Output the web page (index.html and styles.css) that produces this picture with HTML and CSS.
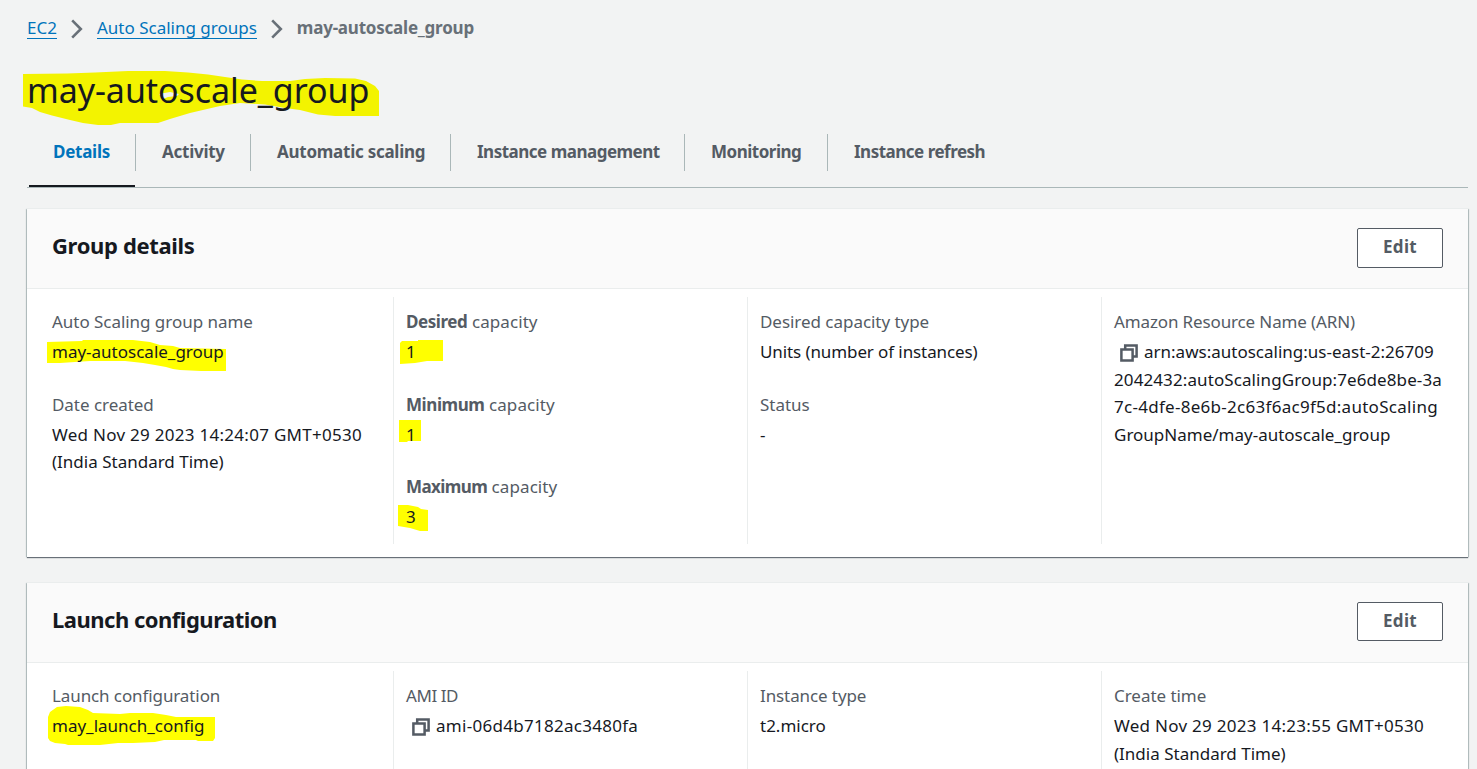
FILE: index.html
```html
<!DOCTYPE html>
<html lang="en">
<head>
<meta charset="utf-8">
<title>may-autoscale_group</title>
<link rel="stylesheet" href="styles.css">
</head>
<body>
<svg width="0" height="0" class="defs">
  <symbol id="copy" viewBox="0 0 18 18"><path d="M5.200 5V1.400h11.400v11.200H13M1.400 5.400h11.200v11.200H1.400z" fill="none" stroke="#545b64" stroke-width="2.500"/></symbol>
  <symbol id="chevron" viewBox="0 0 12 20"><path d="M1.200 1.400L9.800 10L1.200 18.600" fill="none" stroke="#687078" stroke-width="2.600"/></symbol>
</svg>
<main class="page">
  <nav class="crumbs">
    <a class="crumb">EC2</a>
    <svg class="chevron"><use href="#chevron"/></svg>
    <a class="crumb">Auto Scaling groups</a>
    <svg class="chevron"><use href="#chevron"/></svg>
    <span class="current">may-autoscale_group</span>
  </nav>

  <h1 class="title"><svg class="marker title-marker" viewBox="23 71 356 54"><path fill="#f3f300" d="M23 74L67 73.500L95 72.500L128 71L165 71L188 72.500L208 74.500L225 77L242 79.500L262 81L290 81L305 79L325 78L355 78.500L366 81L375 86L379 91V116H335L318 114.500L300 110L285 108L265 104.500L240 103L220 106L190 113L170 119L158 123L120 123L111 125H98L83 123L70 120L52 115.500L40 112L32 108L23 106.500Z"/><path fill="#f1f3f3" d="M159 94L170 92L179 94L177 96L168 97L163 99Z"/></svg><span>may-autoscale_group</span></h1>

  <nav class="tabs">
    <a class="tab active">Details</a>
    <a class="tab">Activity</a>
    <a class="tab">Automatic scaling</a>
    <a class="tab tight">Instance management</a>
    <a class="tab tight">Monitoring</a>
    <a class="tab tight">Instance refresh</a>
  </nav>

  <section class="card group">
    <header class="card-head"><h2 class="heading">Group details</h2><button class="edit">Edit</button></header>
    <div class="columns">
      <div class="column">
        <div class="pair"><div class="label">Auto Scaling group name</div><div class="value"><svg class="marker name-marker" viewBox="47 340 179 32"><path d="M47 342L82 341L83 340H133L150 342L160 345L173 346L180 348L226 349V371H201L180 370L173 369L166 367L155 365L143 363L125 361L90 361L60 363H47Z" fill="#ff0"/></svg><span>may-autoscale_group</span></div></div>
        <div class="pair"><div class="label">Date created</div><div class="value"><span class="digits">Wed Nov 29 2023 14:24:07 GMT+0530</span><br>(India Standard Time)</div></div>
      </div>
      <div class="column">
        <div class="pair"><div class="label capacity"><b>Desired</b> capacity</div><div class="value"><svg class="marker desired-marker" viewBox="0 0 43 24"><path d="M0 3L2 1L18 1V0H43V21L27 21L15 23L0 24Z" fill="#ff0"/></svg><span>1</span></div></div>
        <div class="pair"><div class="label capacity"><b>Minimum</b> capacity</div><div class="value"><svg class="marker minimum-marker" viewBox="0 0 22 22"><path d="M0 0H22V21H9L8 22H0Z" fill="#ff0"/></svg><span>1</span></div></div>
        <div class="pair"><div class="label capacity"><b class="narrow">Maximum</b> capacity</div><div class="value"><svg class="marker maximum-marker" viewBox="0 0 30 26"><path d="M0 0H10L20 2L23 4L30 5V26H22L12 23L0 21Z" fill="#ff0"/></svg><span>3</span></div></div>
      </div>
      <div class="column">
        <div class="pair"><div class="label">Desired capacity type</div><div class="value snug">Units (number of instances)</div></div>
        <div class="pair"><div class="label">Status</div><div class="value">-</div></div>
      </div>
      <div class="column">
        <div class="pair"><div class="label arn-label">Amazon Resource Name (ARN)</div><div class="value"><svg class="copy"><use href="#copy"/></svg>arn:aws:autoscaling:us-east-2:26709<br><span class="id-a">2042432:autoScalingGroup:7e6de8be-3a</span><br><span class="digits">7c-4dfe-8e6b-2c63f6ac9f5d:autoScaling</span><br>GroupName/may-autoscale_group</div></div>
      </div>
    </div>
  </section>

  <section class="card launch">
    <header class="card-head"><h2 class="heading long">Launch configuration</h2><button class="edit">Edit</button></header>
    <div class="columns">
      <div class="column">
        <div class="pair"><div class="label snug">Launch configuration</div><div class="value"><svg class="marker launch-marker" viewBox="48 706 167 39"><path d="M48 717L50 712L57 707L66 706L80 707L88 710L93 713L120 714L130 713H153L166 715L176 717H215V738L213 741H198L196 740H164L155 742L133 743L118 743L100 745H68L65 744L55 743L50 741L48 738Z" fill="#ff0"/></svg><span>may_launch_config</span></div></div>
      </div>
      <div class="column">
        <div class="pair"><div class="label ami">AMI ID</div><div class="value"><svg class="copy"><use href="#copy"/></svg><span class="digits">ami-06d4b7182ac3480fa</span></div></div>
      </div>
      <div class="column">
        <div class="pair"><div class="label snug">Instance type</div><div class="value">t2.micro</div></div>
      </div>
      <div class="column">
        <div class="pair"><div class="label">Create time</div><div class="value"><span class="digits">Wed Nov 29 2023 14:23:55 GMT+0530</span><br>(India Standard Time)</div></div>
      </div>
    </div>
  </section>
</main>
</body>
</html>
```
FILE: styles.css
```css
* { box-sizing: border-box; }
body {
  margin: 0;
  height: 769px;
  overflow: hidden;
  background: #f2f3f3;
  color: #16191f;
  font: 17px/27.5px "Noto Sans", "Open Sans", sans-serif;
}
.defs { display: block; }
.page { padding: 14px 9px 0 27px; }

.crumbs { display: flex; align-items: flex-start; height: 28px; }
.crumb {
  color: #0073bb;
  line-height: 27px;
  height: 25px;
  border-bottom: 1px solid #0073bb;
}
.chevron { width: 12px; height: 20px; margin: 5px 14px 0; flex: none; }
.current { color: #687078; font-weight: 700; letter-spacing: -0.22px; }

.title {
  position: relative;
  margin: 26px 0 0;
  height: 66px;
  font-size: 34px;
  line-height: 44px;
  font-weight: 400;
  letter-spacing: -0.07px;
}
.title span, .value span { position: relative; }
.marker { position: absolute; }
.title-marker { left: -4px; top: 3px; width: 356px; height: 54px; }

.tabs {
  display: grid;
  grid-template-columns: 109px 115px 200px 234px 143px 160px;
  height: 54px;
  padding-bottom: 16px;
  border-bottom: 1px solid #aab7b8;
}
.tab {
  position: relative;
  padding-left: 26px;
  border-right: 1px solid #aab7b8;
  line-height: 36px;
  color: #545b64;
  font-weight: 700;
  letter-spacing: -0.26px;
  white-space: nowrap;
}
.tab:last-child { border-right: 0; }
.tight { letter-spacing: -0.5px; }
.active { color: #0073bb; }
.active::after {
  content: "";
  position: absolute;
  left: 2px;
  right: 0;
  bottom: -16px;
  height: 2px;
  background: #16191f;
}

.card {
  margin-top: 21px;
  width: 1441px;
  background: #fff;
  box-shadow: 0 -1px 0 #eaeded, 0 1px 1px #687078, 1px 0 1px #c0cacb, -1px 0 1px #c0cacb;
}
.group { height: 348px; }
.launch { height: 186px; margin-top: 26px; }
.card-head {
  display: flex;
  justify-content: space-between;
  height: 80px;
  padding: 19px 25px 0;
  background: #fafafa;
  border-bottom: 1px solid #eaeded;
}
.heading { margin: 3px 0 0; font-size: 22px; line-height: 28px; letter-spacing: -0.34px; }
.long { letter-spacing: -0.5px; }
.edit {
  width: 86px;
  height: 40px;
  padding: 0 0 2px;
  border: 1px solid #545b64;
  border-radius: 2px;
  background: #fff;
  color: #545b64;
  font: 700 17px/36px "Noto Sans", sans-serif;
  letter-spacing: 0.3px;
}
.launch .edit { height: 39px; }
.columns {
  display: grid;
  grid-template-columns: repeat(4, 354px);
  height: 255px;
  padding: 8px 0 0 12px;
}
.launch .columns { height: 106px; }
.column {
  display: flex;
  flex-direction: column;
  gap: 25px;
  padding: 11px 0 0 12px;
  border-left: 1px solid #eaeded;
  white-space: nowrap;
}
.column:first-child { border-left-color: transparent; }
.label { color: #545b64; letter-spacing: -0.04px; }
.label b { letter-spacing: -0.42px; }
.label.capacity { letter-spacing: 0.08px; }
.label .narrow { letter-spacing: -0.6px; }
.value { position: relative; margin-top: 2.5px; }
.digits { letter-spacing: 0.28px; }
.id-a { letter-spacing: 0.1px; }
.snug { letter-spacing: -0.1px; }
.label.arn-label { letter-spacing: -0.13px; }
.label.ami { letter-spacing: -0.44px; }
.copy { width: 18px; height: 18px; margin: 0 6px 0 6px; vertical-align: -4px; }
.name-marker { left: -5px; top: 2px; width: 179px; height: 32px; }
.desired-marker { left: -6px; top: 2px; width: 43px; height: 24px; }
.minimum-marker { left: -7px; top: -1px; width: 22px; height: 22px; }
.maximum-marker { left: -8px; top: 2px; width: 30px; height: 26px; }
.launch-marker { left: -4px; top: -6px; width: 167px; height: 39px; }
```
